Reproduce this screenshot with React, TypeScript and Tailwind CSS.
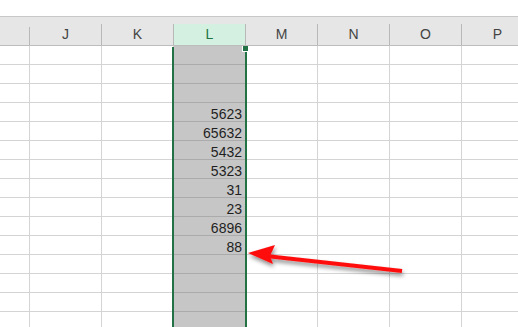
import React from "react";

const cols = ["J", "K", "L", "M", "N", "O", "P"];
const values: Record<number, string> = {
  3: "5623",
  4: "65632",
  5: "5432",
  6: "5323",
  7: "31",
  8: "23",
  9: "6896",
  10: "88",
};

const font = { fontFamily: '"Liberation Sans", Arial, sans-serif' };

export default function App() {
  const rows = Array.from({ length: 15 }, (_, i) => i);

  return (
    <div className="relative w-[518px] h-[327px] overflow-hidden bg-white" style={font}>
      {/* top blank strip */}
      <div className="h-[17px] bg-white border-b border-[#c8c8c8]" />

      {/* column header */}
      <div className="flex h-[29px] bg-[#e6e6e6] border-b border-[#bdbdbd]">
        <div className="w-[30px] shrink-0 flex flex-col">
          <div className="h-[10px]" />
          <div className="flex-1 border-r border-[#b8b8b8]" />
        </div>
        {cols.map((c) => (
          <div key={c} className="w-[72px] shrink-0 flex flex-col">
            <div className="h-[10px]" />
            <div
              className={`flex-1 flex items-center justify-center text-[14px] text-[#444] border-r border-[#b8b8b8] ${
                c === "L" ? "bg-[#d3f0e0] text-[#217346]" : ""
              }`}
            >
              {c}
            </div>
          </div>
        ))}
      </div>

      {/* body rows */}
      {rows.map((r) => (
        <div key={r} className="flex h-[19px]">
          <div className="w-[30px] shrink-0 border-r border-b border-[#d4d4d4]" />
          {cols.map((c) => {
            const sel = c === "L";
            return (
              <div
                key={c}
                className={`w-[72px] shrink-0 border-b flex items-end justify-end pr-[3px] leading-none text-[14px] text-[#1f1f1f] ${
                  sel
                    ? "bg-[#c6c6c6] border-[#ababab] border-r border-r-[#d4d4d4]"
                    : "border-r border-[#d4d4d4]"
                }`}
              >
                {sel ? values[r] ?? "" : ""}
              </div>
            );
          })}
        </div>
      ))}

      {/* selection outline */}
      <div className="absolute left-[172px] top-[47px] w-[75px] h-[290px] border-x-2 border-[#217346]" />
      <div className="absolute left-[242px] top-[46px] w-[6px] h-[6px] bg-[#217346] border-l border-b border-white" />

      {/* annotation arrow */}
      <svg
        className="absolute left-0 top-0"
        width="518"
        height="327"
        viewBox="0 0 518 327"
      >
        <defs>
          <filter id="sh" x="-20%" y="-50%" width="140%" height="200%">
            <feDropShadow dx="1" dy="3" stdDeviation="2" floodColor="#000" floodOpacity="0.45" />
          </filter>
        </defs>
        <g filter="url(#sh)">
          <line x1="402" y1="271" x2="266" y2="256" stroke="#ff0d0d" strokeWidth="4" strokeLinecap="butt" />
          <polygon points="248,253 275,245 270,256 273,264" fill="#ff0d0d" />
        </g>
      </svg>
    </div>
  );
}
